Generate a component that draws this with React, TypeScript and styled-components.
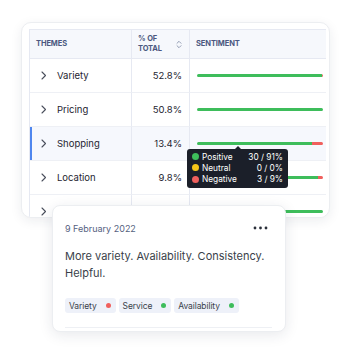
import React from 'react';
import styled, { createGlobalStyle } from 'styled-components';

const GlobalStyle = createGlobalStyle`
  html, body {
    margin: 0;
    padding: 0;
    background: #ffffff;
  }
  body {
    font-family: Inter, 'Noto Sans', sans-serif;
    -webkit-font-smoothing: antialiased;
  }
`;

const Page = styled.div`
  position: relative;
  width: 350px;
  height: 350px;
  padding: 22px 0 0 21px;
  box-sizing: border-box;
  overflow: hidden;
`;

const BackCard = styled.div`
  width: 309px;
  height: 196px;
  box-sizing: border-box;
  background: #ffffff;
  border: 1px solid #eceef1;
  border-radius: 10px;
  box-shadow: 0 3px 12px rgba(30, 40, 70, 0.08);
  padding: 6px 3px 0 7px;
  overflow: hidden;
`;

const Table = styled.div`
  display: grid;
  grid-template-columns: 102px 58px 1fr;
  border-top: 1px solid #e6e9f2;
  border-left: 1px solid #e6e9f2;
`;

const HeadCell = styled.div<{ $divider?: boolean }>`
  height: 29px;
  box-sizing: border-box;
  background: #f6f8fc;
  border-bottom: 1px solid #e6e9f2;
  border-right: ${(p) => (p.$divider ? '1px solid #e6e9f2' : 'none')};
  display: flex;
  align-items: center;
  justify-content: space-between;
  padding: 0 7px 0 6px;
  font-size: 7.5px;
  font-weight: 700;
  line-height: 10px;
  color: #4b5880;
  letter-spacing: -0.1px;
  text-transform: uppercase;
`;

const Cell = styled.div<{ $active?: boolean; $divider?: boolean; $first?: boolean }>`
  height: 34px;
  box-sizing: border-box;
  background: ${(p) => (p.$active ? '#f6f8fd' : '#ffffff')};
  border-bottom: 1px solid #eef0f5;
  border-right: ${(p) => (p.$divider ? '1px solid #e6e9f2' : 'none')};
  box-shadow: ${(p) => (p.$active && p.$first ? 'inset 2px 0 0 #4f86ee' : 'none')};
  display: flex;
  align-items: center;
  font-size: 9.5px;
  color: #1e2430;
`;

const ThemeCell = styled(Cell)`
  padding-left: 11px;
  gap: 10px;
`;

const PctCell = styled(Cell)`
  justify-content: flex-end;
  padding-right: 7px;
`;

const BarCell = styled(Cell)`
  padding: 0 3px 0 7px;
`;

const Bar = styled.div`
  flex: 1;
  height: 2.5px;
  display: flex;
  border-radius: 2px;
  overflow: hidden;
`;

const BarPart = styled.div<{ $color: string }>`
  height: 100%;
  background: ${(p) => p.$color};
`;

const Chevron = () => (
  <svg width="6" height="9" viewBox="0 0 6 9" fill="none">
    <path d="M1 1l3.5 3.5L1 8" stroke="#4a4f5c" strokeWidth="1.1" strokeLinecap="round" strokeLinejoin="round" />
  </svg>
);

const SortIcon = () => (
  <svg width="6" height="9" viewBox="0 0 6 9" fill="none">
    <path d="M1 3.3L3 1.3l2 2M1 5.7l2 2 2-2" stroke="#8a93ab" strokeWidth="0.9" strokeLinecap="round" strokeLinejoin="round" />
  </svg>
);

const MoreIcon = () => (
  <svg width="15" height="4" viewBox="0 0 15 4">
    <circle cx="2" cy="2" r="1.4" fill="#2a2f3a" />
    <circle cx="7.5" cy="2" r="1.4" fill="#2a2f3a" />
    <circle cx="13" cy="2" r="1.4" fill="#2a2f3a" />
  </svg>
);

const Tooltip = styled.div`
  position: absolute;
  left: 187px;
  top: 149px;
  width: 101px;
  box-sizing: border-box;
  background: #1b1f29;
  border-radius: 3px;
  padding: 2px 5px 3px 5px;
  display: flex;
  flex-direction: column;

  &::before {
    content: '';
    position: absolute;
    top: -3px;
    left: 48px;
    border-left: 3px solid transparent;
    border-right: 3px solid transparent;
    border-bottom: 3px solid #1b1f29;
  }
`;

const TipRow = styled.div`
  display: flex;
  align-items: center;
  height: 11.3px;
  font-size: 8.3px;
  color: #ffffff;
`;

const Dot = styled.span<{ $color: string; $size?: number }>`
  width: ${(p) => p.$size ?? 7}px;
  height: ${(p) => p.$size ?? 7}px;
  border-radius: 50%;
  background: ${(p) => p.$color};
  flex-shrink: 0;
`;

const TipLabel = styled.span`
  flex: 1;
  margin-left: 3px;
`;

const FrontCard = styled.div`
  position: absolute;
  left: 52px;
  top: 205px;
  width: 234px;
  height: 127px;
  box-sizing: border-box;
  background: #ffffff;
  border: 1px solid #eceef1;
  border-radius: 8px;
  box-shadow: 0 3px 14px rgba(30, 40, 70, 0.1);
  padding: 16px 17px 0 12px;
  display: flex;
  flex-direction: column;
`;

const CardTop = styled.div`
  display: flex;
  align-items: center;
  justify-content: space-between;
  height: 12px;
`;

const DateText = styled.span`
  font-size: 9px;
  color: #56627f;
`;

const Comment = styled.p`
  margin: 14px 0 0 0;
  font-size: 11px;
  line-height: 17px;
  color: #3a3f4a;
`;

const Tags = styled.div`
  display: flex;
  gap: 3px;
  margin-top: 16px;
`;

const Tag = styled.span`
  display: flex;
  align-items: center;
  gap: 9px;
  height: 15px;
  padding: 0 5px 0 4px;
  border-radius: 3px;
  background: #eef1f9;
  font-size: 8.5px;
  letter-spacing: -0.1px;
  color: #3a3f4a;
`;

const Divider = styled.div`
  margin-top: auto;
  margin-bottom: 3px;
  height: 1px;
  margin-right: -4px;
  background: #eef0f4;
`;

const GREEN = '#3ebd5b';
const RED = '#f0605d';
const YELLOW = '#f5c518';

const rows = [
  { name: 'Variety', pct: '52.8%', pos: 99.5, neg: 0.5 },
  { name: 'Pricing', pct: '50.8%', pos: 100, neg: 0 },
  { name: 'Shopping', pct: '13.4%', pos: 91, neg: 9 },
  { name: 'Location', pct: '9.8%', pos: 96, neg: 4 },
  { name: '', pct: '', pos: 100, neg: 0 },
];

export default function App() {
  return (
    <>
      <GlobalStyle />
      <Page>
        <BackCard>
          <Table>
            <HeadCell $divider>Themes</HeadCell>
            <HeadCell $divider>
              <span>
                % of
                <br />
                Total
              </span>
              <SortIcon />
            </HeadCell>
            <HeadCell>Sentiment</HeadCell>
            {rows.map((r, i) => {
              const active = r.name === 'Shopping';
              return (
                <React.Fragment key={i}>
                  <ThemeCell $active={active} $first $divider>
                    <Chevron />
                    <span>{r.name}</span>
                  </ThemeCell>
                  <PctCell $active={active} $divider>
                    {r.pct}
                  </PctCell>
                  <BarCell $active={active}>
                    <Bar>
                      <BarPart $color={GREEN} style={{ width: `${r.pos}%` }} />
                      <BarPart $color={RED} style={{ width: `${r.neg}%` }} />
                    </Bar>
                  </BarCell>
                </React.Fragment>
              );
            })}
          </Table>
        </BackCard>

        <Tooltip>
          <TipRow>
            <Dot $color={GREEN} />
            <TipLabel>Positive</TipLabel>
            <span>30 / 91%</span>
          </TipRow>
          <TipRow>
            <Dot $color={YELLOW} />
            <TipLabel>Neutral</TipLabel>
            <span>0 / 0%</span>
          </TipRow>
          <TipRow>
            <Dot $color={RED} />
            <TipLabel>Negative</TipLabel>
            <span>3 / 9%</span>
          </TipRow>
        </Tooltip>

        <FrontCard>
          <CardTop>
            <DateText>9 February 2022</DateText>
            <MoreIcon />
          </CardTop>
          <Comment>More variety. Availability. Consistency. Helpful.</Comment>
          <Tags>
            <Tag>
              Variety <Dot $color={RED} $size={5} />
            </Tag>
            <Tag>
              Service <Dot $color={GREEN} $size={5} />
            </Tag>
            <Tag>
              Availability <Dot $color={GREEN} $size={5} />
            </Tag>
          </Tags>
          <Divider />
        </FrontCard>
      </Page>
    </>
  );
}
